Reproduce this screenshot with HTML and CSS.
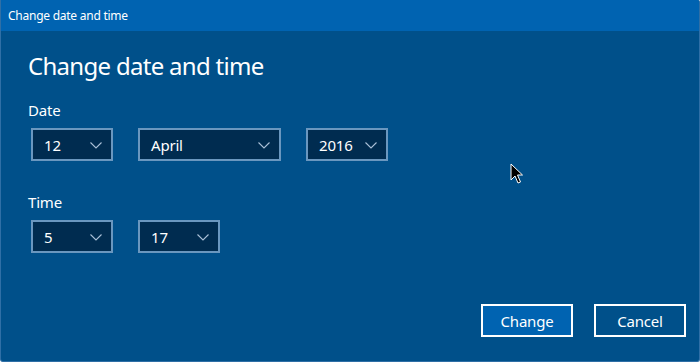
FILE: index.html
```html
<!DOCTYPE html>
<html lang="en">
<head>
<meta charset="utf-8">
<title>Change date and time</title>
<link rel="stylesheet" href="styles.css">
</head>
<body>
<div class="window">
  <div class="titlebar">Change date and time</div>
  <div class="content">
    <h1 class="heading">Change date and time</h1>
    <div class="label">Date</div>
    <div class="row">
      <div class="combo w-small"><span>12</span><svg class="chev" width="12" height="7" viewBox="0 0 12 7"><polyline points="0.5,0.5 6,6 11.5,0.5"/></svg></div>
      <div class="combo w-wide"><span>April</span><svg class="chev" width="12" height="7" viewBox="0 0 12 7"><polyline points="0.5,0.5 6,6 11.5,0.5"/></svg></div>
      <div class="combo w-small"><span>2016</span><svg class="chev" width="12" height="7" viewBox="0 0 12 7"><polyline points="0.5,0.5 6,6 11.5,0.5"/></svg></div>
    </div>
    <div class="label label-time">Time</div>
    <div class="row">
      <div class="combo w-small"><span>5</span><svg class="chev" width="12" height="7" viewBox="0 0 12 7"><polyline points="0.5,0.5 6,6 11.5,0.5"/></svg></div>
      <div class="combo w-small"><span>17</span><svg class="chev" width="12" height="7" viewBox="0 0 12 7"><polyline points="0.5,0.5 6,6 11.5,0.5"/></svg></div>
    </div>
    <div class="actions">
      <button class="btn btn-primary">Change</button>
      <button class="btn">Cancel</button>
    </div>
  </div>
  <svg class="cursor" width="14" height="22" viewBox="0 0 14 22"><path d="M1,1 L1,17 L5,13 L8,20 L10.5,19 L7.5,12 L12.5,12 Z"/></svg>
</div>
</body>
</html>
```

FILE: styles.css
```css
html, body {
  margin: 0;
  padding: 0;
  background: #ffffff;
}
body {
  font-family: "Segoe UI", "Noto Sans", "Open Sans", sans-serif;
  color: #ffffff;
}
.window {
  position: relative;
  box-sizing: border-box;
  width: 700px;
  height: 362px;
  background: #00508a;
  border: 1px solid #2f6fa6;
  border-top: none;
  border-radius: 0 2px 3px 3px;
  display: flex;
  flex-direction: column;
  overflow: hidden;
}
.titlebar {
  height: 31px;
  line-height: 31px;
  background: #0063b1;
  font-size: 12px;
  letter-spacing: -0.25px;
  padding-left: 7px;
  flex: none;
}
.content {
  flex: 1;
  display: flex;
  flex-direction: column;
  padding: 0 13px 24px 27px;
}
.heading {
  margin: 19px 0 0 0;
  font-size: 24px;
  font-weight: 400;
  line-height: 32px;
  letter-spacing: -0.7px;
}
.label {
  margin-top: 18px;
  font-size: 15px;
  line-height: 20px;
  letter-spacing: -0.2px;
}
.label-time {
  margin-top: 31px;
}
.row {
  display: flex;
  gap: 25px;
  margin-top: 8px;
  padding-left: 3px;
}
.combo {
  box-sizing: border-box;
  height: 33px;
  border: 2px solid #6a97bf;
  background: #002c50;
  display: flex;
  align-items: center;
  justify-content: space-between;
  padding: 0 9px 0 11px;
  font-size: 15px;
  letter-spacing: -0.2px;
}
.w-small { width: 82px; }
.w-wide { width: 143px; }
.chev {
  display: block;
  margin-top: 1px;
}
.chev polyline {
  fill: none;
  stroke: #aac1d8;
  stroke-width: 1.1;
}
.actions {
  margin-top: auto;
  display: flex;
  justify-content: flex-end;
  gap: 21px;
}
.btn {
  box-sizing: border-box;
  width: 92px;
  height: 33px;
  border: 2px solid #ffffff;
  background: transparent;
  color: #ffffff;
  font-family: inherit;
  font-size: 15px;
  letter-spacing: -0.2px;
  padding: 0;
}
.btn-primary {
  background: #0063b1;
}
.cursor {
  position: absolute;
  left: 509px;
  top: 163px;
}
.cursor path {
  fill: #000000;
  stroke: #ffffff;
  stroke-width: 1;
  stroke-linejoin: miter;
}
```
